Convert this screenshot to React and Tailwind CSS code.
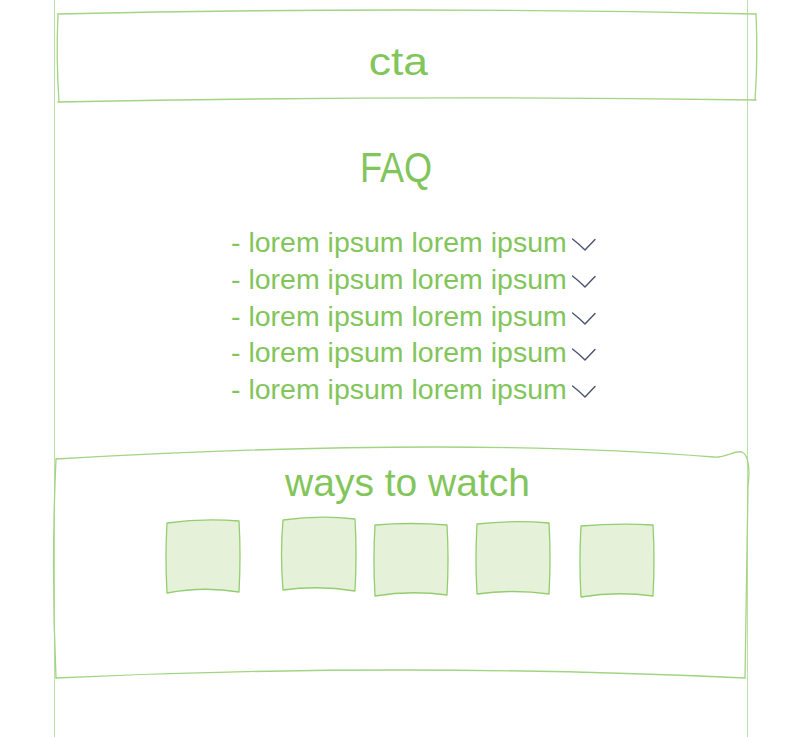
const GREEN = '#82c55b';

function Square({ d, className }) {
  return (
    <div className={`relative w-[74px] h-[74px] shrink-0 ${className}`}>
      <svg className="absolute inset-0 overflow-visible" width="74" height="74" viewBox="0 0 74 74">
        <path d={d} fill="#e5f2d9" stroke="#94cd70" strokeWidth="1.3" strokeLinejoin="round" />
      </svg>
    </div>
  );
}

function Chevron() {
  return (
    <svg className="shrink-0 mt-[14px] ml-[5px]" width="24" height="13" viewBox="0 0 24 13">
      <path d="M0.5 1 Q 7 6 13 12 L 23 1.5" fill="none" stroke="#4b5270" strokeWidth="1.4" strokeLinecap="round" strokeLinejoin="round" />
    </svg>
  );
}

const faqs = [1, 2, 3, 4, 5];

const squares = [
  { d: 'M1 4 Q 37 -1 73 2 Q 75 37 73 73 Q 37 67 1 74 Q -1 37 1 4 Z', cls: 'ml-[112px] mt-[2px]' },
  { d: 'M1 3 Q 37 -2 73 2 Q 75 37 73 74 Q 37 68 1 73 Q -2 37 1 3 Z', cls: 'ml-[42px] mt-0' },
  { d: 'M1 3 Q 37 0 73 3 Q 75 37 73 73 Q 37 68 1 74 Q -1 37 1 3 Z', cls: 'ml-[18px] mt-[5px]' },
  { d: 'M1 3 Q 37 -1 73 2 Q 75 37 73 73 Q 37 68 1 73 Q -1 37 1 3 Z', cls: 'ml-[28px] mt-[4px]' },
  { d: 'M1 3 Q 37 0 73 2 Q 75 37 73 73 Q 37 68 1 74 Q -1 37 1 3 Z', cls: 'ml-[30px] mt-[6px]' },
];

export default function App() {
  return (
    <div
      className="w-[800px] h-[737px] overflow-hidden bg-white"
      style={{ fontFamily: '"Liberation Sans", Arial, sans-serif', color: GREEN }}
    >
      <div className="ml-[54px] w-[694px] h-[737px] border-x border-[#bde0a5] flex flex-col">
        {/* cta */}
        <div className="relative mt-[12px] ml-[3px] mr-[-10px] h-[88px] flex justify-center pr-[18px] pt-[31px]">
          <svg className="absolute inset-0 overflow-visible" width="698" height="88" viewBox="0 0 698 88">
            <g fill="none" stroke="#a3d483" strokeWidth="1.3" strokeLinecap="round">
              <path d="M0 2 Q 349 -6 698 2" />
              <path d="M0 90 Q 349 83 698 88" />
              <path d="M0 2 Q -2 46 1 90" />
              <path d="M698 2 Q 700 45 697 88" />
            </g>
          </svg>
          <span className="inline-block text-[38px] leading-none scale-x-[1.17]">cta</span>
        </div>

        {/* FAQ */}
        <div className="mt-[47px] flex justify-center pr-[10px]">
          <h2 className="text-[42px] leading-none scale-x-[0.86]">FAQ</h2>
        </div>

        <ul className="mt-[35px] ml-[176px] flex flex-col">
          {faqs.map((i) => (
            <li key={i} className="flex items-start h-[36.75px]">
              <span className="text-[28.5px] leading-[36.75px] whitespace-nowrap">- lorem ipsum lorem ipsum</span>
              <Chevron />
            </li>
          ))}
        </ul>

        {/* ways to watch */}
        <div className="relative mt-[38px] mx-[-1px] h-[233px] flex flex-col">
          <svg className="absolute inset-0 overflow-visible" width="694" height="233" viewBox="0 0 694 233">
            <g fill="none" stroke="#a3d483" strokeWidth="1.3" strokeLinecap="round" strokeLinejoin="round">
              <path d="M2 13 Q 400 -10 660 11 C 672 12 680 4 688 6 C 695 9 696 25 694 40 L 691 232" />
              <path d="M2 232 Q 350 216 691 232" />
              <path d="M2 13 Q -3 120 2 232" />
            </g>
          </svg>
          <div className="pt-[17px] flex justify-center pl-[13px]">
            <h3 className="text-[39px] leading-none">ways to watch</h3>
          </div>
          <div className="mt-[15px] flex items-start">
            {squares.map((s, i) => (
              <Square key={i} d={s.d} className={s.cls} />
            ))}
          </div>
        </div>
      </div>
    </div>
  );
}
